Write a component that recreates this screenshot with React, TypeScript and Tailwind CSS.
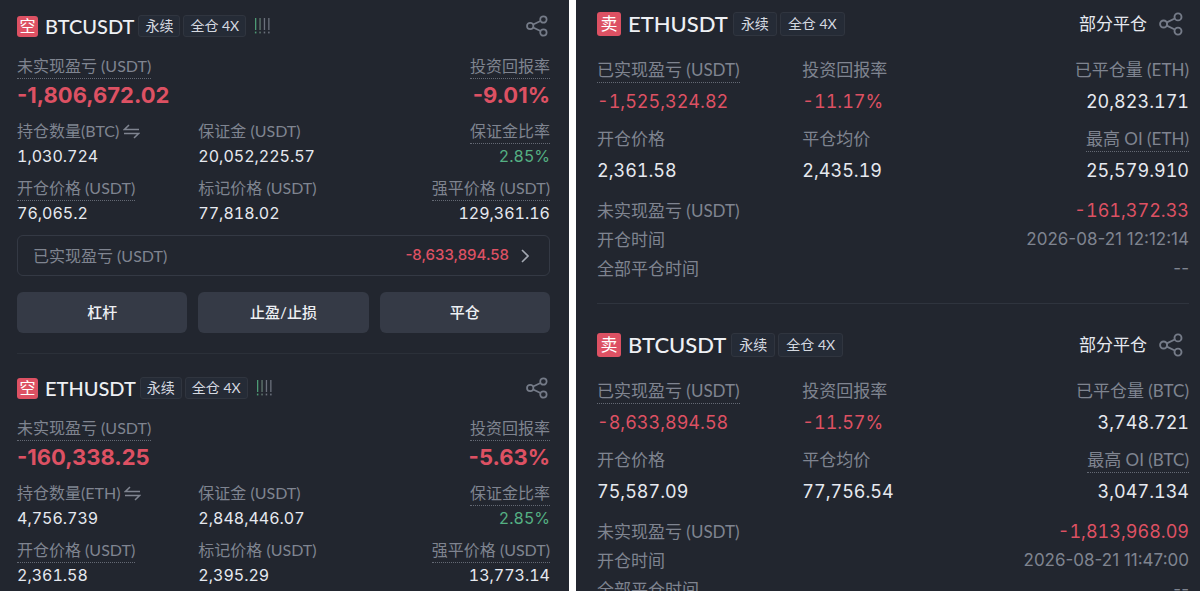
import React from 'react';
import clsx from 'clsx';

interface FieldData {
  label: string;
  value: string;
  underlined?: boolean;
  swap?: boolean;
  tone?: 'plain' | 'red' | 'green';
}

interface Position {
  symbol: string;
  pnl: string;
  roi: string;
  fields: FieldData[];
  realized: string;
}

interface HistoryEntry {
  symbol: string;
  fields: FieldData[];
  unrealized: string;
  openedAt: string;
  closedAt: string;
}

const positions: Position[] = [
  {
    symbol: 'BTCUSDT',
    pnl: '-1,806,672.02',
    roi: '-9.01%',
    fields: [
      { label: '持仓数量(BTC)', value: '1,030.724', swap: true },
      { label: '保证金 (USDT)', value: '20,052,225.57' },
      { label: '保证金比率', value: '2.85%', underlined: true, tone: 'green' },
      { label: '开仓价格 (USDT)', value: '76,065.2', underlined: true },
      { label: '标记价格 (USDT)', value: '77,818.02' },
      { label: '强平价格 (USDT)', value: '129,361.16', underlined: true },
    ],
    realized: '-8,633,894.58',
  },
  {
    symbol: 'ETHUSDT',
    pnl: '-160,338.25',
    roi: '-5.63%',
    fields: [
      { label: '持仓数量(ETH)', value: '4,756.739', swap: true },
      { label: '保证金 (USDT)', value: '2,848,446.07' },
      { label: '保证金比率', value: '2.85%', underlined: true, tone: 'green' },
      { label: '开仓价格 (USDT)', value: '2,361.58', underlined: true },
      { label: '标记价格 (USDT)', value: '2,395.29' },
      { label: '强平价格 (USDT)', value: '13,773.14', underlined: true },
    ],
    realized: '-1,525,324.82',
  },
];

const history: HistoryEntry[] = [
  {
    symbol: 'ETHUSDT',
    fields: [
      { label: '已实现盈亏 (USDT)', value: '-1,525,324.82', underlined: true, tone: 'red' },
      { label: '投资回报率', value: '-11.17%', tone: 'red' },
      { label: '已平仓量 (ETH)', value: '20,823.171' },
      { label: '开仓价格', value: '2,361.58' },
      { label: '平仓均价', value: '2,435.19' },
      { label: '最高 OI (ETH)', value: '25,579.910', underlined: true },
    ],
    unrealized: '-161,372.33',
    openedAt: '2026-08-21 12:12:14',
    closedAt: '--',
  },
  {
    symbol: 'BTCUSDT',
    fields: [
      { label: '已实现盈亏 (USDT)', value: '-8,633,894.58', underlined: true, tone: 'red' },
      { label: '投资回报率', value: '-11.57%', tone: 'red' },
      { label: '已平仓量 (BTC)', value: '3,748.721' },
      { label: '开仓价格', value: '75,587.09' },
      { label: '平仓均价', value: '77,756.54' },
      { label: '最高 OI (BTC)', value: '3,047.134', underlined: true },
    ],
    unrealized: '-1,813,968.09',
    openedAt: '2026-08-21 11:47:00',
    closedAt: '--',
  },
];

const toneClass = {
  plain: 'text-[#e6e9ef]',
  red: 'text-[#dd5163]',
  green: 'text-[#55b083]',
};

const NUM = "font-['Inter','Noto_Sans_CJK_SC',sans-serif]";

const ShareIcon = ({ className }: { className: string }) => (
  <svg viewBox="0 0 24 24" className={className} fill="none" stroke="currentColor" strokeWidth="1.9" aria-hidden="true">
    <circle cx="4.6" cy="12" r="3.5" />
    <circle cx="19" cy="4.9" r="3.5" />
    <circle cx="19" cy="19.1" r="3.5" />
    <path d="M7.8 10.4 15.8 6.5M7.8 13.6l8 3.9" />
  </svg>
);

const SwapIcon = () => (
  <svg viewBox="0 0 17 15" className="w-[17px] h-[15px]" fill="none" stroke="currentColor" strokeWidth="1.5" aria-hidden="true">
    <path d="M6 1 1.2 5.6H16M1 9.4h14.8L11 14" />
  </svg>
);

const RiskBars = () => (
  <svg viewBox="0 0 17 16" className="w-[17px] h-4 ml-[5px]" aria-hidden="true">
    {['#4d9a74', '#62776f', '#6b707c', '#6b707c'].map((color, i) => (
      <g key={i} fill={color}>
        <rect x={1 + i * 4.4} y="0" width="1.3" height="12" />
        <rect x={0.9 + i * 4.4} y="13.6" width="1.5" height="1.8" />
      </g>
    ))}
  </svg>
);

const Tag = ({ children, large }: { children: React.ReactNode; large?: boolean }) => (
  <span
    className={clsx(
      'flex items-center justify-center rounded-[3px] border border-[#30353f] bg-[#252b36] text-sm text-[#d5d9e0] whitespace-nowrap',
      large ? 'h-6 px-[7px]' : 'h-[22px] px-1.5'
    )}
  >
    {children}
  </span>
);

const Label = ({ field, large }: { field: FieldData; large?: boolean }) => (
  <span className="flex items-center gap-1 text-[#7f8490]">
    <span
      className={clsx(
        'border-b border-dotted leading-6 whitespace-nowrap',
        large ? 'text-[17px]' : 'text-base',
        field.underlined ? 'border-[#646974]' : 'border-transparent'
      )}
    >
      {field.label}
    </span>
    {field.swap && (
      <button aria-label="切换单位">
        <SwapIcon />
      </button>
    )}
  </span>
);

const PositionCard = ({ data }: { data: Position }) => (
  <article>
    <header className="flex items-center justify-between h-7">
      <div className="flex items-center gap-[3px]">
        <span className="flex items-center justify-center size-[21px] rounded-[3px] bg-[#dd5163] text-white text-base mr-1">空</span>
        <h2 className="text-xl font-medium text-[#eef0f4] mr-px">{data.symbol}</h2>
        <Tag>永续</Tag>
        <Tag>全仓 4X</Tag>
        <RiskBars />
      </div>
      <button aria-label="分享" className="text-[#757b88] mr-0.5">
        <ShareIcon className="size-[22px]" />
      </button>
    </header>

    <div className="flex justify-between mt-3.5">
      <div className="flex flex-col items-start">
        <Label field={{ label: '未实现盈亏 (USDT)', value: '', underlined: true }} />
        <span className={clsx(NUM, 'text-[22px] leading-8 font-bold text-[#dd5163]')}>{data.pnl}</span>
      </div>
      <div className="flex flex-col items-end">
        <Label field={{ label: '投资回报率', value: '', underlined: true }} />
        <span className={clsx(NUM, 'text-[22px] leading-8 font-bold text-[#dd5163]')}>{data.roi}</span>
      </div>
    </div>

    <div className="grid grid-cols-3 gap-x-[11px] gap-y-2 mt-2">
      {data.fields.map((f, i) => (
        <div key={f.label} className={clsx('flex flex-col', i % 3 === 2 ? 'items-end' : 'items-start')}>
          <Label field={f} />
          <span className={clsx(NUM, 'tabular-nums text-base leading-6', toneClass[f.tone ?? 'plain'])}>{f.value}</span>
        </div>
      ))}
    </div>

    <button className="flex items-center w-full h-[41px] mt-2.5 pl-[15px] pr-5 rounded-md border border-[#343944] text-[#7f8490]">
      <span className="text-base">已实现盈亏 (USDT)</span>
      <span className={clsx(NUM, 'ml-auto text-[15px] font-medium text-[#dd5163]')}>{data.realized}</span>
      <svg viewBox="0 0 8 14" className="w-2 h-3.5 ml-3 text-[#a3a8b2]" fill="none" stroke="currentColor" strokeWidth="1.6" aria-hidden="true">
        <path d="m1 1 6 6-6 6" />
      </svg>
    </button>

    <div className="grid grid-cols-3 gap-[11px] mt-4">
      {['杠杆', '止盈/止损', '平仓'].map((action) => (
        <button key={action} className="h-[41px] rounded-md bg-[#353a46] text-[#eef0f4] text-[15px] font-medium">
          {action}
        </button>
      ))}
    </div>
  </article>
);

const HistoryCard = ({ data }: { data: HistoryEntry }) => (
  <article className="text-[17px]">
    <header className="flex items-center justify-between h-7">
      <div className="flex items-center gap-[3px]">
        <span className="flex items-center justify-center size-6 rounded-[3px] bg-[#dd5163] text-white mr-1">卖</span>
        <h2 className="text-[22px] leading-6 font-medium text-[#eef0f4] mr-0.5">{data.symbol}</h2>
        <Tag large>永续</Tag>
        <Tag large>全仓 4X</Tag>
      </div>
      <div className="flex items-center gap-3 mr-1.5">
        <span className="text-[#e6e9ef]">部分平仓</span>
        <button aria-label="分享" className="text-[#757b88]">
          <ShareIcon className="size-6" />
        </button>
      </div>
    </header>

    <div className="grid grid-cols-3 gap-x-6 gap-y-[11px] mt-5">
      {data.fields.map((f, i) => (
        <div key={f.label} className={clsx('flex flex-col gap-[5px]', i % 3 === 2 ? 'items-end' : 'items-start')}>
          <Label field={f} large />
          <span className={clsx(NUM, 'tabular-nums text-lg leading-7', toneClass[f.tone ?? 'plain'])}>{f.value}</span>
        </div>
      ))}
    </div>

    <dl className="mt-[11px] leading-[29px] text-[#7f8490]">
      <div className="flex justify-between">
        <dt>未实现盈亏 (USDT)</dt>
        <dd className={clsx(NUM, 'tabular-nums text-lg leading-[29px] text-[#dd5163]')}>{data.unrealized}</dd>
      </div>
      <div className="flex justify-between">
        <dt>开仓时间</dt>
        <dd className={NUM}>{data.openedAt}</dd>
      </div>
      <div className="flex justify-between">
        <dt>全部平仓时间</dt>
        <dd className={NUM}>{data.closedAt}</dd>
      </div>
    </dl>
  </article>
);

export default function App() {
  return (
    <main className="grid grid-cols-[569fr_624fr] gap-[7px] h-screen overflow-hidden bg-white font-['Lato','Noto_Sans_CJK_SC',sans-serif]" lang="zh-CN">
      <section className="min-w-0 overflow-hidden bg-[#22262f] pt-3 pl-[17px] pr-[19px]">
        {positions.map((p, i) => (
          <React.Fragment key={p.symbol}>
            {i > 0 && <hr className="my-5 border-[#2b3039]" />}
            <PositionCard data={p} />
          </React.Fragment>
        ))}
      </section>
      <section className="min-w-0 overflow-hidden bg-[#22262f] pt-2.5 pl-[21px] pr-[11px]">
        {history.map((h, i) => (
          <React.Fragment key={h.symbol}>
            {i > 0 && <hr className="mt-5 mb-[27px] border-[#2f343e]" />}
            <HistoryCard data={h} />
          </React.Fragment>
        ))}
      </section>
    </main>
  );
}
